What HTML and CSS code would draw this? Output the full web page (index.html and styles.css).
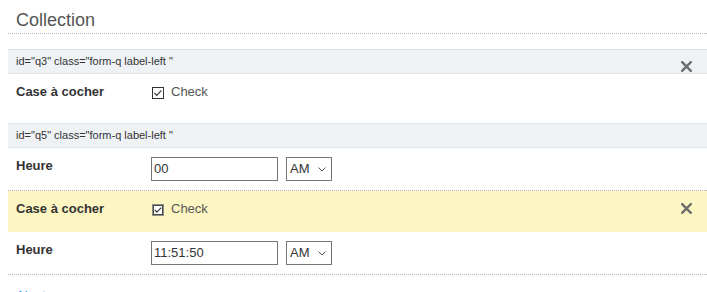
FILE: index.html
```html
<!DOCTYPE html>
<html lang="fr">
<head>
<meta charset="utf-8">
<title>Collection</title>
<link rel="stylesheet" href="styles.css">
</head>
<body>
<div class="page">
  <h1 class="title">Collection</h1>

  <div class="group item">
    <div class="qhead">id="q3" class="form-q label-left "</div>
    <span class="close"><svg width="11" height="11" viewBox="0 0 11 11"><path d="M1.2 1.2 L9.8 9.8 M9.8 1.2 L1.2 9.8" stroke="#6e6e6e" stroke-width="2.4" stroke-linecap="square" fill="none"/></svg></span>
    <div class="row row-check">
      <div class="label">Case à cocher</div>
      <div class="control">
        <span class="cb"><svg width="12" height="12" viewBox="0 0 12 12"><rect x="0.5" y="0.5" width="11" height="11" fill="#fff" stroke="#333"/><path d="M2.5 6 L4.8 8.4 L9.4 3.4" stroke="#333" stroke-width="1.1" fill="none"/></svg></span>
        <span class="cb-text">Check</span>
      </div>
    </div>
  </div>

  <div class="group">
    <div class="qhead">id="q5" class="form-q label-left "</div>
    <div class="row row-time sep">
      <div class="label">Heure</div>
      <div class="control">
        <div class="field">00</div>
        <div class="select">AM<svg width="8" height="5" viewBox="0 0 8 5"><path d="M0.5 0.5 L4 4 L7.5 0.5" stroke="#555" stroke-width="1" fill="none"/></svg></div>
      </div>
    </div>
    <div class="item">
      <span class="close"><svg width="11" height="11" viewBox="0 0 11 11"><path d="M1.2 1.2 L9.8 9.8 M9.8 1.2 L1.2 9.8" stroke="#6e6e6e" stroke-width="2.4" stroke-linecap="square" fill="none"/></svg></span>
      <div class="row row-check hl">
        <div class="label">Case à cocher</div>
        <div class="control">
          <span class="cb"><svg width="12" height="12" viewBox="0 0 12 12"><rect x="0.5" y="0.5" width="11" height="11" fill="#fff" stroke="#222" stroke-dasharray="1 1"/><rect x="1.5" y="1.5" width="9" height="9" fill="#fff" stroke="#444"/><path d="M2.8 6 L4.9 8.2 L9.2 3.6" stroke="#333" stroke-width="1.1" fill="none"/></svg></span>
          <span class="cb-text">Check</span>
        </div>
      </div>
      <div class="row row-time sep">
        <div class="label">Heure</div>
        <div class="control">
          <div class="field">11:51:50</div>
          <div class="select">AM<svg width="8" height="5" viewBox="0 0 8 5"><path d="M0.5 0.5 L4 4 L7.5 0.5" stroke="#555" stroke-width="1" fill="none"/></svg></div>
        </div>
      </div>
    </div>
    <a class="add" href="#">Ajouter</a>
  </div>
</div>
</body>
</html>
```

FILE: styles.css
```css
html, body {
  margin: 0;
  padding: 0;
  background: #fff;
}
body {
  font-family: "Liberation Sans", Arial, sans-serif;
  color: #333;
  overflow: hidden;
}
.page {
  padding-left: 8px;
}
.title {
  margin: 9px 0 15px 0;
  padding: 0 0 2px 8px;
  font-size: 18px;
  line-height: 22px;
  font-weight: normal;
  color: #555;
  border-bottom: 1px dotted #b5b5b5;
}
.group {
  margin-bottom: 8px;
}
.item {
  position: relative;
}
.qhead {
  background: #eef2f5;
  border-top: 1px solid #dde3e9;
  border-bottom: 1px solid #dde3e9;
  height: 23px;
  line-height: 23px;
  padding-left: 8px;
  font-size: 11px;
  color: #333;
}
.close {
  position: absolute;
  top: 12px;
  right: 15px;
  width: 11px;
  height: 11px;
  display: block;
}
.close svg {
  display: block;
}
.row {
  display: flex;
  padding: 9px 8px 9px 8px;
}
.row-check {
  padding-bottom: 15px;
}
.row.hl {
  background: #fdf6c3;
}
.row.sep {
  border-bottom: 1px dotted #b5b5b5;
}
.label {
  width: 135px;
  flex: none;
  font-size: 13px;
  line-height: 17px;
  font-weight: bold;
  color: #333;
}
.control {
  display: flex;
  align-items: flex-start;
  gap: 8px;
}
.row-check .control {
  gap: 0;
  height: 17px;
  align-items: center;
}
.cb {
  display: block;
  width: 12px;
  height: 12px;
  margin: 3px 0 0 1px;
}
.cb svg {
  display: block;
}
.cb-text {
  margin-left: 7px;
  font-size: 13px;
  line-height: 17px;
  color: #555;
}
.field {
  box-sizing: border-box;
  width: 127px;
  height: 24px;
  border: 1px solid #767676;
  padding: 0 2px;
  font-size: 13px;
  line-height: 22px;
  color: #333;
  background: #fff;
}
.select {
  box-sizing: border-box;
  width: 46px;
  height: 24px;
  border: 1px solid #767676;
  padding: 0 5px 0 3px;
  font-size: 13px;
  line-height: 22px;
  color: #333;
  display: flex;
  align-items: center;
  justify-content: space-between;
}
.select svg {
  display: block;
  margin-top: 1px;
}
.add {
  display: block;
  margin-top: 12px;
  padding-left: 8px;
  font-size: 13px;
  line-height: 17px;
  color: #1e88e5;
  text-decoration: none;
}
```
